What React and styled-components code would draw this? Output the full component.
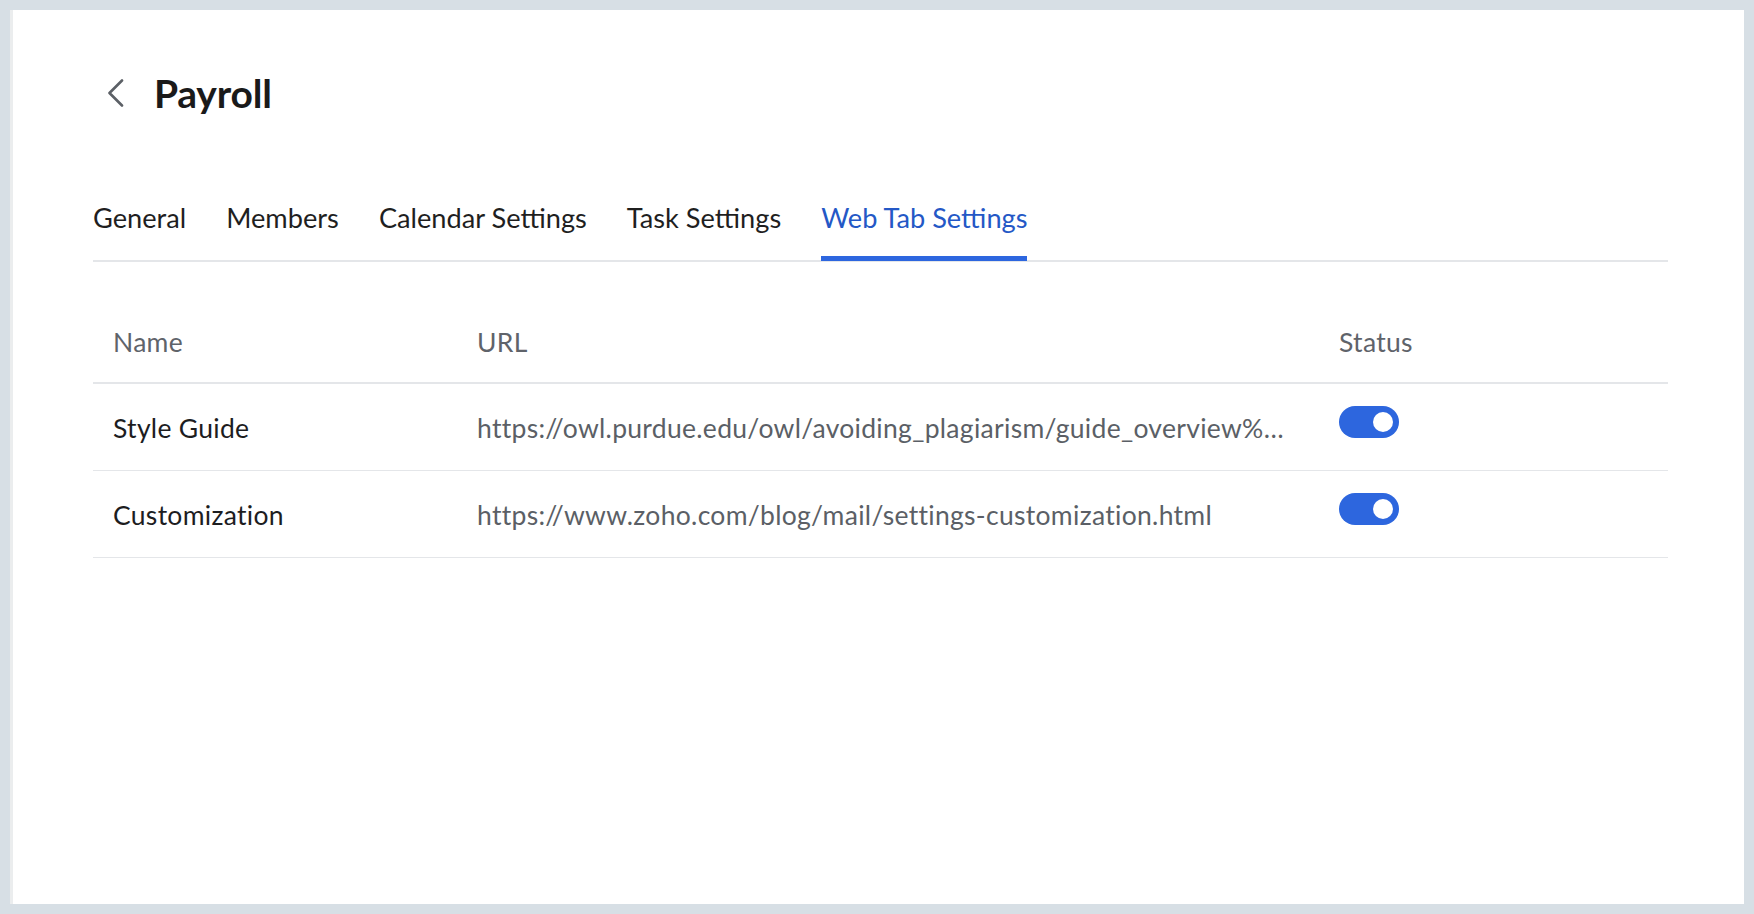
import React from "react";
import styled, { createGlobalStyle } from "styled-components";

const GlobalStyle = createGlobalStyle`
  html, body {
    margin: 0;
    padding: 0;
    background: #d7dfe5;
    font-family: Lato, "Noto Sans", sans-serif;
  }
  * {
    box-sizing: border-box;
  }
`;

const Page = styled.div`
  height: 914px;
  padding: 10px 10px 10px 10px;
`;

const Card = styled.div`
  height: 100%;
  background: #ffffff;
  border-left: 3px solid #ebedee;
  padding: 59px 76px 0 80px;
`;

const Header = styled.div`
  display: flex;
  align-items: center;
  height: 48px;
`;

const BackButton = styled.button`
  display: flex;
  align-items: center;
  justify-content: center;
  width: 30px;
  height: 30px;
  margin-left: 7px;
  margin-right: 24px;
  padding: 0;
  border: none;
  background: none;
  color: #5c6066;
  cursor: pointer;
`;

const Title = styled.h1`
  margin: 0;
  font-size: 39px;
  line-height: 48px;
  font-weight: 700;
  color: #1a1a1a;
  letter-spacing: -0.2px;
`;

const TabBar = styled.div`
  display: flex;
  gap: 40px;
  margin-top: 84px;
  border-bottom: 2px solid #e4e6e9;
`;

const Tab = styled.div`
  font-size: 27.2px;
  line-height: 34px;
  padding-bottom: 21px;
  color: ${(p) => (p.$active ? "#2458c6" : "#1f1f1f")};
  border-bottom: 5px solid ${(p) => (p.$active ? "#2d66df" : "transparent")};
  margin-bottom: -1px;
  cursor: pointer;
`;

const Table = styled.div`
  display: flex;
  flex-direction: column;
`;

const Row = styled.div`
  display: grid;
  grid-template-columns: 364px 862px 1fr;
  border-bottom: ${(p) => (p.$head ? "2px" : "1px")} solid #e4e6e9;
`;

const Cell = styled.div`
  padding: ${(p) => (p.$head ? "64px 20px 24px" : "28px 20px 26px")};
  font-size: 26.5px;
  line-height: 32px;
  letter-spacing: 0.3px;
  color: ${(p) => (p.$head ? "#5f636a" : p.$muted ? "#5b5f66" : "#1d1d1f")};
  white-space: nowrap;
  overflow: hidden;
  text-overflow: ellipsis;
`;

const UrlCell = styled(Cell)`
  padding-right: 30px;
`;

const ToggleCell = styled.div`
  padding: 22px 20px 0;
`;

const Track = styled.div`
  position: relative;
  width: 60px;
  height: 32px;
  border-radius: 16px;
  background: ${(p) => (p.$on ? "#2d66de" : "#c5c9cf")};
  cursor: pointer;
`;

const Knob = styled.span`
  position: absolute;
  top: 6px;
  left: ${(p) => (p.$on ? "34px" : "6px")};
  width: 20px;
  height: 20px;
  border-radius: 50%;
  background: #ffffff;
`;

const tabs = [
  "General",
  "Members",
  "Calendar Settings",
  "Task Settings",
  "Web Tab Settings",
];

const webTabs = [
  {
    name: "Style Guide",
    url: "https://owl.purdue.edu/owl/avoiding_plagiarism/guide_overview%20and%20more.html",
    on: true,
  },
  {
    name: "Customization",
    url: "https://www.zoho.com/blog/mail/settings-customization.html",
    on: true,
  },
];

const Toggle = ({ on }) => (
  <Track $on={on}>
    <Knob $on={on} />
  </Track>
);

const App = () => {
  return (
    <>
      <GlobalStyle />
      <Page>
        <Card>
          <Header>
            <BackButton aria-label="Back">
              <svg width="17" height="28" viewBox="0 0 17 28" fill="none">
                <polyline
                  points="15,1.5 2.5,14 15,26.5"
                  stroke="currentColor"
                  strokeWidth="2.6"
                  strokeLinecap="round"
                  strokeLinejoin="round"
                />
              </svg>
            </BackButton>
            <Title>Payroll</Title>
          </Header>

          <TabBar>
            {tabs.map((t) => (
              <Tab key={t} $active={t === "Web Tab Settings"}>
                {t}
              </Tab>
            ))}
          </TabBar>

          <Table>
            <Row $head>
              <Cell $head>Name</Cell>
              <Cell $head>URL</Cell>
              <Cell $head>Status</Cell>
            </Row>
            {webTabs.map((w) => (
              <Row key={w.name}>
                <Cell>{w.name}</Cell>
                <UrlCell $muted>{w.url}</UrlCell>
                <ToggleCell>
                  <Toggle on={w.on} />
                </ToggleCell>
              </Row>
            ))}
          </Table>
        </Card>
      </Page>
    </>
  );
};

export default App;
